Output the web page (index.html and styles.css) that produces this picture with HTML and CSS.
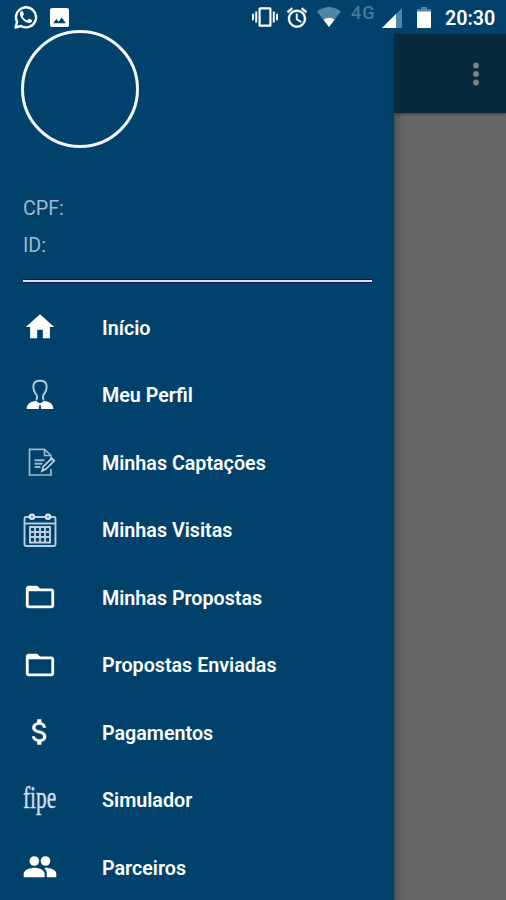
FILE: index.html
```html
<!DOCTYPE html>
<html lang="pt-BR">
<head>
    <meta charset="UTF-8">
    <meta name="viewport" content="width=device-width, initial-scale=1.0">
    <title>Menu</title>
    <link rel="stylesheet" href="styles.css">
</head>
<body>
    <div class="phone">
        <header class="status-bar">
            <svg class="whatsapp" viewBox="0 0 24 24">
                <path d="M1.500 22.500l1.600-5.600A10 10 0 1 1 7 21z" fill="none" stroke="#fff" stroke-width="2.400" stroke-linejoin="round"/>
                <path d="M8.800 6.500c-.3-.6-.6-.6-.9-.6-1.100 0-2 1.300-2 2.800 0 3.900 5.300 9.300 9.200 9.300 1.700 0 3.100-1.200 3.100-2.400 0-.3-.1-.5-.3-.6l-2.600-1.300c-.3-.1-.6 0-.8.300l-1 1.200c-.2.200-.4.200-.7.100-1.900-.8-3.300-2.200-4.100-3.800-.1-.3 0-.5.200-.7l.9-1.100c.1-.2.200-.4.100-.7z" fill="#fff"/>
            </svg>
            <svg class="picture" viewBox="3 3 18 18">
                <path d="M21 19V5c0-1.100-.9-2-2-2H5c-1.100 0-2 .9-2 2v14c0 1.100.9 2 2 2h14c1.100 0 2-.9 2-2zM6 17.500l3-4 2.200 2.500 3-4 3.800 5.500z" fill="#fff"/>
            </svg>

            <div class="status-right">
                <svg class="vibrate" viewBox="0 3 24 18">
                    <path d="M0 15h1.800V9H0v6zm3-0v2h1.800V7H3v8zm19.200-6v6H24V9h-1.800zm-3 8H21V7h-1.800v10zM16.500 3h-9C6.670 3 6 3.670 6 4.500v15c0 .83.67 1.500 1.500 1.500h9c.83 0 1.500-.67 1.500-1.500v-15c0-.83-.67-1.500-1.500-1.500zM16 19H8V5h8v14z" fill="#fff"/>
                </svg>
                <svg class="alarm" viewBox="2 1.700 20 20.300">
                    <path d="M22 5.720l-4.600-3.860-1.290 1.530 4.600 3.860L22 5.720zM7.880 3.390L6.600 1.860 2 5.710l1.290 1.530 4.590-3.850zM12.500 8H11v6l4.750 2.850.75-1.230-4-2.370V8zM12 4c-4.970 0-9 4.030-9 9s4.020 9 9 9a9 9 0 0 0 0-18zm0 16c-3.870 0-7-3.130-7-7s3.130-7 7-7 7 3.130 7 7-3.130 7-7 7z" fill="#fff" stroke="#fff" stroke-width=".4"/>
                </svg>
                <svg class="wifi" viewBox="0 0 24 20">
                    <path d="M12 20L0 4.500Q12-4.500 24 4.500z" fill="#5285a3"/>
                    <path d="M12 20L6.500 12.700Q12 9 17.500 12.700z" fill="#fff"/>
                </svg>
                <span class="network">4G</span>
                <svg class="signal" viewBox="0 0 20 20">
                    <path d="M0 20L20 0v20z" fill="#5285a3"/>
                    <path d="M0 20L14 6v14z" fill="#fff"/>
                </svg>
                <svg class="battery" viewBox="0 0 14 21">
                    <path d="M4 0h6v2h3q1 0 1 1v2H0V3q0-1 1-1h3z" fill="#5285a3"/>
                    <path d="M0 4.500h14V20q0 1-1 1H1q-1 0-1-1z" fill="#fff"/>
                </svg>
                <span class="clock">20:30</span>
            </div>
        </header>

        <div class="screen">
            <nav class="drawer">
                <div class="avatar"></div>
                <div class="user-info">
                    <p>CPF:</p>
                    <p>ID:</p>
                </div>

                <ul class="menu">
                    <li class="menu-item">
                        <svg class="icon" viewBox="0 0 24 24"><path d="M10 20v-6h4v6h5v-8h3L12 3 2 12h3v8z" fill="#fff"/></svg>
                        <span>Início</span>
                    </li>
                    <li class="menu-item">
                        <svg class="icon" viewBox="0 0 34 34">
                            <path d="M13.300 22q1.300-2.400.4-4.800C11.500 14.500 10.100 11 10.400 7.800 10.700 4 13.300 2.700 17 2.700s6.300 1.300 6.600 5.100c.3 3.200-1.100 6.700-3.300 9.400q-.9 2.400.4 4.800" fill="none" stroke="#b9ccda" stroke-width="1.900"/>
                            <path d="M12.800 22.500l3.200 2.500h2l3.200-2.500 1.200.7c4.800.8 7.600 2.600 8.100 7.800H18.300l-.7-4h-1.200l-.7 4H3.500c.5-5.200 3.300-7 8.100-7.800z" fill="#fff"/>
                        </svg>
                        <span>Meu Perfil</span>
                    </li>
                    <li class="menu-item">
                        <svg class="icon" viewBox="0 0 34 34">
                            <g fill="none" stroke="#9cb8ca" stroke-width="1.700">
                                <path d="M28 16v-5.500L21.500 4.300H6.500V30H28v-6"/>
                                <path d="M21.500 4.300v6.200H28"/>
                                <path d="M11.500 15.300h10M11.500 18.700h8M11.500 22h6" stroke-width="1.900"/>
                                <path d="M19 26l1.500-4.500 8.300-8.300 2.500 2.600-8.300 8.200z" stroke="#c3d4e0"/>
                            </g>
                        </svg>
                        <span>Minhas Captações</span>
                    </li>
                    <li class="menu-item">
                        <svg class="icon" viewBox="0 0 34 34">
                            <g fill="none" stroke="#bccfdd" stroke-width="1.900">
                                <rect x="1.500" y="4" width="31" height="29" rx="1.500"/>
                                <path d="M1.500 10.500h31"/>
                                <path d="M7 14h20v15.500H7zM12 14v15M17 14v15M22 14v15M7 19h20M7 24h20"/>
                            </g>
                            <g fill="#7497b0" stroke="#e3ebf2" stroke-width="1.800">
                                <circle cx="9" cy="3.800" r="2.300"/>
                                <circle cx="25" cy="3.800" r="2.300"/>
                            </g>
                        </svg>
                        <span>Minhas Visitas</span>
                    </li>
                    <li class="menu-item">
                        <svg class="icon" viewBox="0 0 24 24"><path d="M20 6h-8l-2-2H4c-1.100 0-1.990.9-1.990 2L2 18c0 1.100.9 2 2 2h16c1.100 0 2-.9 2-2V8c0-1.100-.9-2-2-2zm0 12H4V8h16v10z" fill="#fff"/></svg>
                        <span>Minhas Propostas</span>
                    </li>
                    <li class="menu-item">
                        <svg class="icon" viewBox="0 0 24 24"><path d="M20 6h-8l-2-2H4c-1.100 0-1.990.9-1.990 2L2 18c0 1.100.9 2 2 2h16c1.100 0 2-.9 2-2V8c0-1.100-.9-2-2-2zm0 12H4V8h16v10z" fill="#fff"/></svg>
                        <span>Propostas Enviadas</span>
                    </li>
                    <li class="menu-item">
                        <svg class="icon" viewBox="0 0 24 24"><path d="M11.800 10.900c-2.270-.59-3-1.200-3-2.150 0-1.090 1.010-1.850 2.700-1.850 1.780 0 2.440.85 2.500 2.100h2.210c-.07-1.720-1.120-3.300-3.210-3.810V3h-3v2.160c-1.940.42-3.500 1.680-3.500 3.610 0 2.310 1.910 3.460 4.700 4.130 2.500.6 3 1.480 3 2.410 0 .69-.49 1.790-2.700 1.790-2.060 0-2.870-.92-2.980-2.100h-2.200c.12 2.190 1.760 3.420 3.680 3.830V21h3v-2.150c1.950-.37 3.500-1.500 3.500-3.550 0-2.840-2.430-3.810-4.700-4.400z" fill="#fff"/></svg>
                        <span>Pagamentos</span>
                    </li>
                    <li class="menu-item">
                        <span class="icon fipe"><span>fipe</span></span>
                        <span>Simulador</span>
                    </li>
                    <li class="menu-item">
                        <svg class="icon" viewBox="0 0 34 34">
                            <g fill="#fff">
                                <circle cx="11.300" cy="11" r="4.800"/>
                                <circle cx="22.500" cy="11" r="4.800"/>
                                <path d="M.7 27.300v-3.500c0-4 6.800-6 10.600-6s10.300 2 10.300 6v3.500z"/>
                                <path d="M21.300 17.900c4.300-.4 12 1.600 12 5.900v3.500h-9.500v-3.500c0-2.500-1-4.500-2.500-5.900z"/>
                            </g>
                        </svg>
                        <span>Parceiros</span>
                    </li>
                </ul>
            </nav>

            <main class="page">
                <div class="toolbar">
                    <svg class="more" viewBox="0 0 6 24">
                        <g fill="#7b8388">
                            <circle cx="3" cy="3.500" r="2.900"/>
                            <circle cx="3" cy="12" r="2.900"/>
                            <circle cx="3" cy="20.500" r="2.900"/>
                        </g>
                    </svg>
                </div>
            </main>
        </div>
    </div>
</body>
</html>
```
FILE: styles.css
```css
* {
    box-sizing: border-box;
    margin: 0;
    padding: 0;
}
body {
    font-family: Roboto, sans-serif;
    background-color: #00426b;
    color: #fff;
}
svg {
    display: block;
    flex-shrink: 0;
}
.phone {
    width: 506px;
    height: 900px;
    overflow: hidden;
    display: flex;
    flex-direction: column;
}
.status-bar {
    height: 34px;
    flex-shrink: 0;
    display: flex;
    align-items: flex-start;
    padding: 5px 11px 0 14px;
    background-color: #00426b;
}
.whatsapp {
    width: 24px;
    height: 24px;
}
.picture {
    width: 19px;
    height: 19px;
    margin: 3px 0 0 12px;
}
.status-right {
    display: flex;
    margin-left: auto;
}
.vibrate {
    width: 26px;
    height: 20px;
    margin: 2px 9px 0 0;
}
.alarm {
    width: 20px;
    height: 21px;
    margin: 2px 10px 0 0;
}
.wifi {
    width: 24px;
    height: 20px;
    margin: 2px 10px 0 0;
}
.network {
    width: 24px;
    margin-right: 7px;
    font-size: 18px;
    font-weight: 500;
    line-height: 16px;
    letter-spacing: 1px;
    color: #477998;
}
.signal {
    width: 20px;
    height: 20px;
    margin: 3px 15px 0 0;
}
.battery {
    width: 14px;
    height: 21px;
    margin: 2px 14px 0 0;
}
.clock {
    width: 50px;
    font-size: 19.7px;
    font-weight: 600;
    line-height: 27px;
    white-space: nowrap;
}
.screen {
    flex: 1;
    display: flex;
    min-height: 0;
}
.drawer {
    width: 394px;
    flex-shrink: 0;
    background-color: #00426b;
}
.avatar {
    width: 118px;
    height: 118px;
    margin: -4px 0 0 21px;
    border: 3px solid #f4f6fc;
    border-radius: 50%;
}
.user-info {
    height: 134px;
    margin: 0 22px 0 23px;
    padding-top: 42px;
    border-bottom: 2px solid #e4e0fa;
    box-shadow: 0 1px 0 #0a1058, inset 0 -1px 0 #0a1058;
}
.user-info p {
    font-size: 19.7px;
    line-height: 37px;
    color: #a3b9c9;
}
.menu {
    list-style: none;
    margin-top: 12.5px;
}
.menu-item {
    display: flex;
    align-items: center;
    height: 67.5px;
    padding-left: 23px;
    font-size: 19.7px;
    font-weight: 600;
}
.icon {
    width: 34px;
    height: 34px;
    margin: -2px 45px 0 0;
}
.fipe {
    display: flex;
    align-items: center;
    font-family: "Liberation Serif", serif;
    font-size: 31px;
    font-weight: 400;
    font-variant-ligatures: none;
    line-height: 30px;
    color: #d3deea;
    -webkit-text-stroke: 0.4px #d3deea;
}
.fipe span {
    transform: scaleX(0.69);
    transform-origin: left;
    margin-top: -3px;
}
.page {
    flex: 1;
    background-color: #666;
    box-shadow: inset 10px 0 10px -8px rgba(0, 0, 0, 0.3);
}
.toolbar {
    height: 79px;
    display: flex;
    justify-content: flex-end;
    align-items: center;
    padding-right: 27px;
    background-color: #072a3e;
    box-shadow: 0 1px 3px rgba(0, 0, 0, 0.4);
}
.more {
    width: 6px;
    height: 24px;
}
```
